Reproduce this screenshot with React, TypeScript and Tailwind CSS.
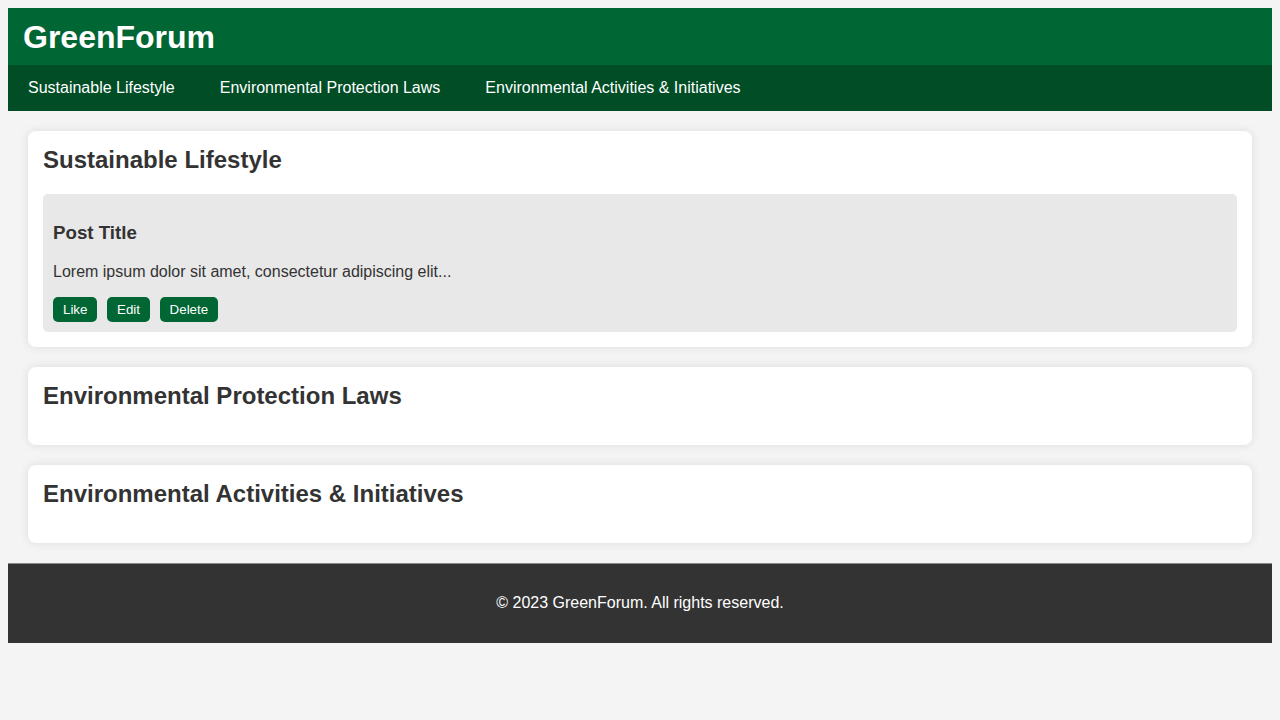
import React from 'react';

const navLinks = ['Sustainable Lifestyle', 'Environmental Protection Laws', 'Environmental Activities & Initiatives'];

type Post = { title: string; body: string };

const sections: { name: string; posts: Post[] }[] = [
  {
    name: 'Sustainable Lifestyle',
    posts: [{ title: 'Post Title', body: 'Lorem ipsum dolor sit amet, consectetur adipiscing elit...' }],
  },
  { name: 'Environmental Protection Laws', posts: [] },
  { name: 'Environmental Activities & Initiatives', posts: [] },
];

const PostCard: React.FC<{ post: Post }> = ({ post }) => (
  <div className="rounded-[5px] bg-[#e8e8e8] p-[10px]">
    <h3 className="my-[18.72px] text-[18.72px] font-bold leading-[21.5px]">{post.title}</h3>
    <p className="mb-4 text-base leading-[18.4px]">{post.body}</p>
    <div className="flex gap-[9.6px]">
      {['Like', 'Edit', 'Delete'].map((label) => (
        <button
          key={label}
          className="rounded-[5px] bg-[#006633] px-[10px] py-[5px] text-[13.33px] leading-[15.5px] text-white"
        >
          {label}
        </button>
      ))}
    </div>
  </div>
);

export default function App() {
  return (
    <div className="min-h-screen bg-[#f4f4f4] p-2 font-['Liberation_Sans',Arial,sans-serif] text-[#333]">
      <header className="bg-[#006633] pt-[11px] text-white">
        <h1 className="pl-[15px] text-[32px] font-bold leading-[37px]">GreenForum</h1>
        <nav className="mt-[9px] bg-[#004d26]">
          <ul className="flex gap-[5px]">
            {navLinks.map((link) => (
              <li key={link}>
                <a href="#" className="block px-5 py-[14px] text-base leading-[18px] text-white">
                  {link}
                </a>
              </li>
            ))}
          </ul>
        </nav>
      </header>

      <main className="flex flex-col gap-5 p-5">
        {sections.map((section) => (
          <section
            key={section.name}
            className="rounded-lg bg-white p-[15px] shadow-[0_0_10px_rgba(0,0,0,0.1)]"
          >
            <h2 className="mb-5 text-2xl leading-[27.6px] font-bold">{section.name}</h2>
            <div>
              {section.posts.map((post) => (
                <PostCard key={post.title} post={post} />
              ))}
            </div>
          </section>
        ))}
      </main>

      <footer className="flex h-[80px] items-center justify-center border-t border-[#8a8a8a] bg-[#333] text-base leading-[18px] text-white">
        <p>&copy; 2023 GreenForum. All rights reserved.</p>
      </footer>
    </div>
  );
}
